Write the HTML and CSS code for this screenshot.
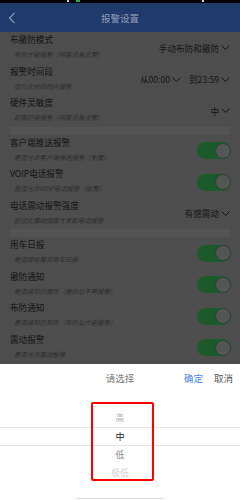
FILE: index.html
```html
<!DOCTYPE html>
<html lang="zh-CN">
<head>
<meta charset="utf-8">
<title>报警设置</title>
<link rel="stylesheet" href="styles.css">
</head>
<body>
<div class="screen">
  <div class="statusbar"><span class="sb sb1"></span><span class="sb sb2"></span><span class="sb sb3"></span></div>
  <div class="navbar">
    <svg class="back" width="8" height="12" viewBox="0 0 8 12"><polyline points="6.5,0.8 1.5,6 6.5,11.2" fill="none" stroke="#8e9ab3" stroke-width="1.2"/></svg>
    <div class="navtitle">报警设置</div>
  </div>
  <div class="content">
    <div class="row">
      <div class="text"><div class="title">布撤防模式</div><div class="sub">布防才能报警（鸣笛设备设置）</div></div>
      <div class="ctrl"><span class="val">手动布防和撤防</span><svg class="chev" width="9" height="5" viewBox="0 0 9 5"><polyline points="0.5,0.5 4.5,4.5 8.5,0.5" fill="none" stroke="#161616" stroke-width="1"/></svg></div>
    </div>
    <div class="row">
      <div class="text"><div class="title">报警时间段</div><div class="sub">仅在此时间段内报警</div></div>
      <div class="ctrl two">
        <span class="grp"><span class="val">从00:00</span><svg class="chev" width="9" height="5" viewBox="0 0 9 5"><polyline points="0.5,0.5 4.5,4.5 8.5,0.5" fill="none" stroke="#161616" stroke-width="1"/></svg></span>
        <span class="grp"><span class="val">到23:59</span><svg class="chev" width="9" height="5" viewBox="0 0 9 5"><polyline points="0.5,0.5 4.5,4.5 8.5,0.5" fill="none" stroke="#161616" stroke-width="1"/></svg></span>
      </div>
    </div>
    <div class="row">
      <div class="text"><div class="title">硬件灵敏度</div><div class="sub">超高超易报警（鸣笛设备设置）</div></div>
      <div class="ctrl"><span class="val">中</span><svg class="chev" width="9" height="5" viewBox="0 0 9 5"><polyline points="0.5,0.5 4.5,4.5 8.5,0.5" fill="none" stroke="#161616" stroke-width="1"/></svg></div>
    </div>
    <div class="band"><div class="band-inner"></div></div>
    <div class="row">
      <div class="text"><div class="title">客户端推送报警</div><div class="sub">是否允许客户端推送报警（免费）</div></div>
      <div class="toggle"><span class="knob"></span></div>
    </div>
    <div class="row">
      <div class="text"><div class="title">VOIP电话报警</div><div class="sub">是否允许VOIP电话报警（收费）</div></div>
      <div class="toggle"><span class="knob"></span></div>
    </div>
    <div class="row">
      <div class="text"><div class="title">电话震动报警强度</div><div class="sub">超过此震动强度才发起电话报警</div></div>
      <div class="ctrl"><span class="val">有感震动</span><svg class="chev" width="9" height="5" viewBox="0 0 9 5"><polyline points="0.5,0.5 4.5,4.5 8.5,0.5" fill="none" stroke="#161616" stroke-width="1"/></svg></div>
    </div>
    <div class="band"><div class="band-inner"></div></div>
    <div class="row">
      <div class="text"><div class="title">用车日报</div><div class="sub">是否接收每日用车日报</div></div>
      <div class="toggle"><span class="knob"></span></div>
    </div>
    <div class="row">
      <div class="text"><div class="title">撤防通知</div><div class="sub">是否通知已撤防（撤防后不再报警）</div></div>
      <div class="toggle"><span class="knob"></span></div>
    </div>
    <div class="row">
      <div class="text"><div class="title">布防通知</div><div class="sub">是否通知已布防（布防后才能报警）</div></div>
      <div class="toggle"><span class="knob"></span></div>
    </div>
    <div class="row">
      <div class="text"><div class="title">震动报警</div><div class="sub">是否允许震动报警</div></div>
      <div class="toggle"><span class="knob"></span></div>
    </div>
  </div>
  <div class="sheet">
    <div class="sheet-head">
      <span></span>
      <span class="sheet-title">请选择</span>
      <span class="sheet-btns"><span class="ok">确定</span><span class="cancel">取消</span></span>
    </div>
    <div class="picker">
      <div class="item far">高</div>
      <div class="item sel">中</div>
      <div class="item near">低</div>
      <div class="item farther">极低</div>
      <div class="mark"></div>
    </div>
    <div class="indicator"></div>
  </div>
</div>
</body>
</html>
```

FILE: styles.css
```css
* { box-sizing: border-box; }
html, body { margin: 0; padding: 0; }
body {
  width: 240px;
  height: 500px;
  overflow: hidden;
  background: #4d4d4d;
  font-family: "Noto Sans CJK SC", "Noto Sans", sans-serif;
}
.screen { width: 240px; height: 500px; display: flex; flex-direction: column; }

.statusbar { height: 3px; background: #000; display: flex; flex-shrink: 0; }
.sb { display: block; height: 2px; }
.sb1 { width: 2px; margin-left: 67px; background: #cfcfcf; }
.sb2 { width: 4px; margin-left: 7px; background: #2fa84a; }
.sb3 { width: 2px; margin-left: 122px; background: #cfcfcf; }

.navbar {
  height: 29px;
  background: #1f3b6b;
  display: flex;
  align-items: center;
  justify-content: center;
  position: relative;
  flex-shrink: 0;
}
.back { position: absolute; left: 8px; top: 9px; }
.navtitle { color: #8e9ab3; font-size: 9.5px; line-height: 12px; }

.content { height: 332px; overflow: hidden; flex-shrink: 0; background: #4d4d4d; }
.row {
  height: 31.5px;
  display: flex;
  align-items: center;
  justify-content: space-between;
  padding: 0 10px;
}
.text { display: flex; flex-direction: column; }
.title { font-size: 8.6px; line-height: 15px; color: #141414; white-space: nowrap; }
.sub {
  font-size: 6.4px;
  line-height: 16px;
  color: #2e2e2e;
  font-style: italic;
  padding-left: 4px;
  white-space: nowrap;
}
.ctrl { display: flex; align-items: center; gap: 2px; }
.ctrl.two { gap: 8px; }
.grp { display: flex; align-items: center; gap: 2px; }
.val { font-size: 8.6px; line-height: 12px; color: #161616; white-space: nowrap; }
.chev { display: block; }

.toggle {
  width: 34px;
  height: 17px;
  border-radius: 8.5px;
  background: #1d5a2b;
  margin-right: -1px;
  margin-top: 1px;
  display: flex;
  align-items: center;
  justify-content: flex-end;
  padding-right: 0.5px;
}
.knob {
  width: 16px;
  height: 16px;
  border-radius: 50%;
  background: #555555;
  border: 0.5px solid #2c4533;
}

.band { height: 8px; padding: 0 10px; }
.band-inner { height: 100%; background: #535353; }

.sheet {
  height: 136px;
  background: #fff;
  flex-shrink: 0;
  display: flex;
  flex-direction: column;
}
.sheet-head {
  height: 28px;
  display: grid;
  grid-template-columns: 1fr auto 1fr;
  align-items: center;
}
.sheet-title { font-size: 9.5px; color: #7a7a7a; line-height: 12px; }
.sheet-btns { display: flex; justify-content: flex-end; gap: 11px; padding-right: 7px; font-size: 9.5px; line-height: 12px; }
.ok { color: #4a86e8; }
.cancel { color: #555; }

.picker { position: relative; padding-top: 17px; height: 106px; }
.item { height: 18px; line-height: 18px; text-align: center; font-size: 8.8px; }
.item.far { color: #b4b4b4; }
.item.sel { color: #1e1e1e; height: 19px; line-height: 17px; border-top: 1px solid #e6e6e6; border-bottom: 1px solid #e6e6e6; font-size: 9.2px; }
.item.near { color: #8a8a8a; }
.item.farther { color: #d2d2d2; }
.mark {
  position: absolute;
  left: 91px;
  top: 10px;
  width: 63px;
  height: 79px;
  border: 2px solid #f00;
  border-radius: 2px;
}
.indicator { height: 1px; margin: 0 76px; background: #dcdcdc; }
```
